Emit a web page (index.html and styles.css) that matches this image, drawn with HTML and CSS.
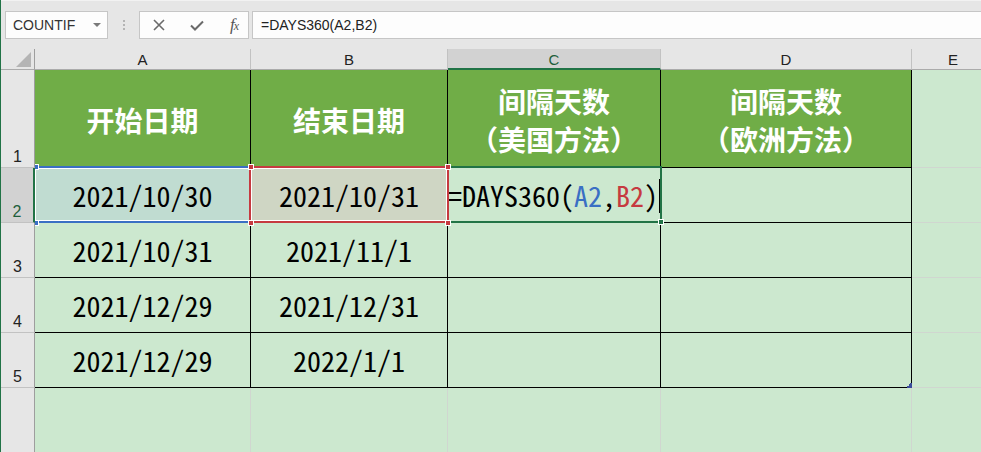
FILE: index.html
```html
<!DOCTYPE html>
<html lang="zh-CN">
<head>
    <meta charset="UTF-8">
    <title>DAYS360</title>
    <link rel="stylesheet" href="styles.css">
</head>
<body>
<!-- Formula bar -->
<div class="toolbar">
    <div class="namebox">
        <span>COUNTIF</span>
        <i class="caret"></i>
    </div>
    <div class="grip"><b></b><b></b><b></b></div>
    <div class="fx-buttons">
        <svg width="12" height="12" viewBox="0 0 12 12"><path d="M1 1L11 11M11 1L1 11" stroke="#6a6a6a" stroke-width="1.6" fill="none"/></svg>
        <svg width="14" height="11" viewBox="0 0 14 11"><path d="M1 5.5L5 9.5L13 1.5" stroke="#6a6a6a" stroke-width="2" fill="none"/></svg>
        <span class="fx">f<small>x</small></span>
    </div>
    <div class="formula">=DAYS360(A2,B2)</div>
</div>

<!-- Worksheet -->
<div class="sheet">
    <div class="grid">
        <div class="corner"><i></i></div>
        <div class="col-head">A</div>
        <div class="col-head">B</div>
        <div class="col-head selected">C</div>
        <div class="col-head">D</div>
        <div class="col-head">E</div>

        <div class="row-head">1</div>
        <div class="cell title">开始日期</div>
        <div class="cell title">结束日期</div>
        <div class="cell title">间隔天数<br>（美国方法）</div>
        <div class="cell title last">间隔天数<br>（欧洲方法）</div>
        <div class="cell grid-cell"></div>

        <div class="row-head selected">2</div>
        <div class="cell ref-a">2021/10/30</div>
        <div class="cell ref-b">2021/10/31</div>
        <div class="cell editing">=DAYS360(<span class="blue">A2</span>,<span class="red">B2</span>)</div>
        <div class="cell last"></div>
        <div class="cell grid-cell"></div>

        <div class="row-head">3</div>
        <div class="cell">2021/10/31</div>
        <div class="cell">2021/11/1</div>
        <div class="cell"></div>
        <div class="cell last"></div>
        <div class="cell grid-cell"></div>

        <div class="row-head">4</div>
        <div class="cell">2021/12/29</div>
        <div class="cell">2021/12/31</div>
        <div class="cell"></div>
        <div class="cell last"></div>
        <div class="cell grid-cell"></div>

        <div class="row-head">5</div>
        <div class="cell">2021/12/29</div>
        <div class="cell">2022/1/1</div>
        <div class="cell"></div>
        <div class="cell last"></div>
        <div class="cell grid-cell"></div>

        <div class="row-head"></div>
        <div class="cell grid-cell"></div>
        <div class="cell grid-cell"></div>
        <div class="cell grid-cell"></div>
        <div class="cell grid-cell"></div>
        <div class="cell grid-cell"></div>
    </div>

    <!-- reference highlights and active cell -->
    <div class="box box-a"></div>
    <div class="box box-b"></div>
    <div class="box box-c"></div>
    <i class="handle blue-h" style="left: 34px; top: 115px;"></i>
    <i class="handle blue-h" style="left: 34px; top: 171px;"></i>
    <i class="handle red-h" style="left: 247px; top: 115px;"></i>
    <i class="handle red-h" style="left: 247px; top: 171px;"></i>
    <i class="handle red-h" style="left: 444px; top: 115px;"></i>
    <i class="handle red-h" style="left: 444px; top: 171px;"></i>
    <i class="handle fill-h"></i>
    <i class="cursor"></i>
    <svg class="resize" width="5" height="5" viewBox="0 0 5 5"><path d="M5 0V5H0V3H2V1H3V0Z" fill="#3b4c9c"/></svg>
</div>
</body>
</html>
```

FILE: styles.css
```css
* {
    box-sizing: border-box;
}

body {
    margin: 0;
    width: 981px;
    height: 452px;
    overflow: hidden;
    background-color: #cce8cf;
    border-left: 1px solid #217346;
    font-family: "Liberation Sans", Arial, sans-serif;
}

/* ---------- formula bar ---------- */

.toolbar {
    height: 49px;
    background-color: #e6e6e6;
    border-top: 1px solid #f2f2f2;
    display: flex;
    align-items: flex-start;
    padding-top: 10px;
    padding-left: 4px;
}

.namebox,
.fx-buttons,
.formula {
    height: 28px;
    background-color: #fdfdfd;
    border: 1px solid #c6c6c6;
    display: flex;
    align-items: center;
}

.namebox {
    width: 103px;
    padding: 0 0 0 7px;
    font-size: 14px;
    color: #333;
    justify-content: space-between;
}

.caret {
    width: 0;
    height: 0;
    margin-right: 6px;
    border-left: 4px solid transparent;
    border-right: 4px solid transparent;
    border-top: 4px solid #7a7a7a;
}

.grip {
    width: 31px;
    display: flex;
    flex-direction: column;
    align-items: center;
    gap: 2px;
    padding-top: 9px;
}

.grip b {
    width: 2px;
    height: 2px;
    background-color: #b4b4b4;
}

.fx-buttons {
    width: 110px;
    padding: 0 10px 0 13px;
    justify-content: space-between;
}

.fx {
    font-family: "Liberation Serif", serif;
    font-style: italic;
    font-size: 17px;
    color: #555;
    letter-spacing: -1px;
}

.fx small {
    font-size: 12px;
}

.formula {
    flex: 1;
    margin-left: 3px;
    border-right: none;
    padding-left: 8px;
    font-size: 14px;
    color: #222;
}

/* ---------- worksheet ---------- */

.sheet {
    position: relative;
}

.grid {
    display: grid;
    grid-template-columns: 34px 216px 197px 213px 251px 83px;
    grid-template-rows: 21px 98px 55px 55px 55px 55px 65px;
}

.corner {
    position: relative;
    background-color: #e6e6e6;
    border-right: 1px solid #9e9e9e;
    border-bottom: 1px solid #ababab;
}

.corner i {
    position: absolute;
    right: 3px;
    bottom: 2px;
    width: 15px;
    height: 15px;
    background-color: #b4b4b4;
    clip-path: polygon(100% 0, 100% 100%, 0 100%);
}

.col-head {
    background-color: #e6e6e6;
    border-right: 1px solid #c2c2c2;
    border-bottom: 1px solid #ababab;
    display: flex;
    align-items: center;
    justify-content: center;
    font-size: 15px;
    color: #222;
    padding-top: 1px;
}

.col-head.selected {
    background-color: #d2d2d2;
    color: #1e5e3b;
    border-bottom: 2px solid #217346;
}

.row-head {
    background-color: #e6e6e6;
    border-right: 1px solid #9e9e9e;
    border-bottom: 1px solid #c2c2c2;
    display: flex;
    align-items: flex-end;
    justify-content: center;
    font-size: 16px;
    color: #222;
    padding-bottom: 1px;
}

.row-head.selected {
    background-color: #d2d2d2;
    color: #1e5e3b;
    border-right: 2px solid #217346;
}

.cell {
    border-right: 1px solid #000;
    border-bottom: 1px solid #000;
    display: flex;
    align-items: center;
    justify-content: center;
    font-family: "Noto Sans Mono CJK SC", "Noto Sans CJK SC", monospace;
    font-size: 28px;
    color: #000;
}

.cell.title {
    background-color: #70ad47;
    color: #fff;
    font-weight: bold;
    line-height: 38px;
    text-align: center;
    padding-top: 2px;
}

.cell.grid-cell {
    border-right-color: #d0d6d0;
    border-bottom-color: #d0d6d0;
}

.cell.ref-a {
    background-color: #c0dcd1;
}

.cell.ref-b {
    background-color: #cfd6c4;
}

.cell.editing {
    justify-content: flex-start;
    padding-left: 0;
}

.blue {
    color: #3a6fc4;
}

.red {
    color: #c63a40;
}

/* ---------- selection overlays ---------- */

.box {
    position: absolute;
    top: 117px;
    height: 57px;
    box-shadow: inset 0 0 0 1px #fff;
}

.box-a {
    left: 34px;
    width: 216px;
    border-top: 2px solid #3a6fc4;
    border-bottom: 2px solid #3a6fc4;
}

.box-b {
    left: 248px;
    width: 200px;
    border: 2px solid #c63a40;
}

.box-c {
    left: 448px;
    width: 213px;
    border: 2px solid #217346;
    border-left: none;
    box-shadow: none;
}

.handle {
    position: absolute;
    width: 6px;
    height: 6px;
    border: 1px solid #fff;
}

.blue-h {
    width: 4px;
    background-color: #3a6fc4;
    border-left: none;
}

.red-h {
    background-color: #c63a40;
}

.fill-h {
    left: 657px;
    top: 170px;
    background-color: #217346;
}

.cursor {
    position: absolute;
    left: 658px;
    top: 130px;
    width: 1px;
    height: 34px;
    background-color: #000;
}

.resize {
    position: absolute;
    left: 906px;
    top: 334px;
}
```
